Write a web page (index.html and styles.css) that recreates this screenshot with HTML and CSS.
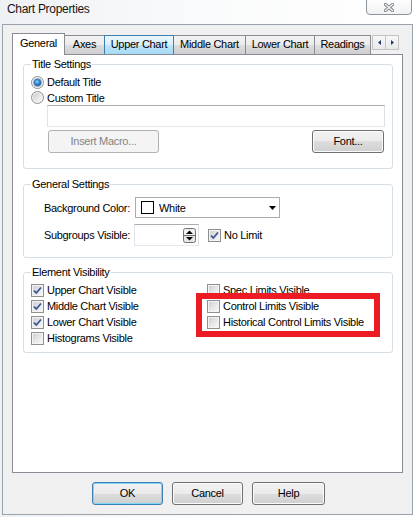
FILE: index.html
```html
<!DOCTYPE html>
<html>
<head>
<meta charset="utf-8">
<title>Chart Properties</title>
<link rel="stylesheet" href="styles.css">
</head>
<body>
<div class="window">
  <div class="titlebar">
    <span class="title">Chart Properties</span>
    <div class="close-btn">
      <svg width="10" height="9" viewBox="0 0 10 9">
        <path d="M1.5 1.5L8.5 7.5M8.5 1.5L1.5 7.5" stroke="#7b8086" stroke-width="3.2" stroke-linecap="square" fill="none"/>
        <path d="M1.5 1.5L8.5 7.5M8.5 1.5L1.5 7.5" stroke="#f6f6f6" stroke-width="1.3" stroke-linecap="square" fill="none"/>
      </svg>
    </div>
  </div>
  <div class="client">
    <div class="tabstrip">
      <div class="tab sel w-general">General</div>
      <div class="tab w-axes">Axes</div>
      <div class="tab hover w-upper">Upper Chart</div>
      <div class="tab w-middle">Middle Chart</div>
      <div class="tab w-lower">Lower Chart</div>
      <div class="tab w-readings">Readings</div>
      <div class="tabscroll">
        <span class="sbtn"><svg width="3" height="5" viewBox="0 0 3 5"><path d="M3 0V5L0 2.5Z" fill="#1f3c78"/></svg></span>
        <span class="sbtn"><svg width="3" height="5" viewBox="0 0 3 5"><path d="M0 0V5L3 2.5Z" fill="#1f3c78"/></svg></span>
      </div>
    </div>
    <div class="panel">
      <fieldset class="group ts">
        <legend>Title Settings</legend>
        <div class="opt r1"><span class="radio checked"></span><span>Default Title</span></div>
        <div class="opt r2"><span class="radio"></span><span>Custom Title</span></div>
        <div class="textbox title-input"></div>
        <div class="ts-buttons">
          <div class="btn disabled w-macro">Insert Macro...</div>
          <div class="btn w-font">Font...</div>
        </div>
      </fieldset>
      <fieldset class="group gs">
        <legend>General Settings</legend>
        <div class="gsrow row-bg">
          <span class="lbl">Background Color:</span>
          <div class="combo">
            <span class="swatch"></span>
            <span class="combo-text">White</span>
            <svg class="combo-arrow" width="7" height="4" viewBox="0 0 7 4"><path d="M0 0H7L3.5 4Z" fill="#000"/></svg>
          </div>
        </div>
        <div class="gsrow row-sub">
          <span class="lbl">Subgroups Visible:</span>
          <div class="spin">
            <svg class="spin-arrows" width="13" height="15" viewBox="0 0 13 15">
              <rect x="0.5" y="0.5" width="12" height="14" rx="2" fill="#e6e6e6" stroke="#707070"/>
              <rect x="1.5" y="1.5" width="10" height="5.5" fill="#f4f4f4"/>
              <line x1="1" y1="7.5" x2="12" y2="7.5" stroke="#707070"/>
              <path d="M3 6H10L6.5 2.5Z" fill="#000"/>
              <path d="M3 9H10L6.5 12.5Z" fill="#000"/>
            </svg>
          </div>
          <div class="opt nolimit"><span class="cb checked"><svg width="11" height="11" viewBox="0 0 11 11"><path d="M2 5.5L4.3 8L9 2.5" stroke="#3d5590" stroke-width="1.8" fill="none"/></svg></span><span>No Limit</span></div>
        </div>
      </fieldset>
      <fieldset class="group ev">
        <legend>Element Visibility</legend>
        <div class="evgrid">
          <div class="opt"><span class="cb checked"><svg width="11" height="11" viewBox="0 0 11 11"><path d="M2 5.5L4.3 8L9 2.5" stroke="#3d5590" stroke-width="1.8" fill="none"/></svg></span><span>Upper Chart Visible</span></div>
          <div class="opt"><span class="cb"></span><span>Spec Limits Visible</span></div>
          <div class="opt"><span class="cb checked"><svg width="11" height="11" viewBox="0 0 11 11"><path d="M2 5.5L4.3 8L9 2.5" stroke="#3d5590" stroke-width="1.8" fill="none"/></svg></span><span>Middle Chart Visible</span></div>
          <div class="opt"><span class="cb"></span><span>Control Limits Visible</span></div>
          <div class="opt"><span class="cb checked"><svg width="11" height="11" viewBox="0 0 11 11"><path d="M2 5.5L4.3 8L9 2.5" stroke="#3d5590" stroke-width="1.8" fill="none"/></svg></span><span>Lower Chart Visible</span></div>
          <div class="opt"><span class="cb"></span><span>Historical Control Limits Visible</span></div>
          <div class="opt"><span class="cb"></span><span>Histograms Visible</span></div>
        </div>
      </fieldset>
    </div>
    <div class="dlg-buttons">
      <div class="btn default w-ok">OK</div>
      <div class="btn w-cancel">Cancel</div>
      <div class="btn w-help">Help</div>
    </div>
  </div>
  <div class="highlight"></div>
</div>
</body>
</html>
```

FILE: styles.css
```css
html, body {
  margin: 0;
  padding: 0;
}
body {
  font-family: "Liberation Sans", Arial, sans-serif;
  font-size: 11px;
  letter-spacing: -0.3px;
  color: #000;
  background: #ffffff;
}
.window {
  position: relative;
  width: 415px;
  height: 517px;
  overflow: hidden;
  background: linear-gradient(90deg, #eef1f4 0%, #f9fafb 45%, #ffffff 100%);
}
.titlebar {
  display: flex;
  align-items: flex-start;
  height: 24px;
  box-sizing: border-box;
  padding-left: 7px;
}
.title {
  font-size: 12px;
  line-height: 15px;
  padding-top: 2px;
  color: #151515;
}
.close-btn {
  margin-left: auto;
  margin-right: 3px;
  margin-top: -1px;
  width: 46px;
  height: 16px;
  box-sizing: border-box;
  border: 1px solid #8d949c;
  border-radius: 0 0 4px 4px;
  background: linear-gradient(#fdfdfd, #f1f2f3);
  display: flex;
  align-items: center;
  justify-content: center;
  padding-top: 1px;
}
.client {
  margin-left: 2px;
  width: 411px;
  height: 491px;
  box-sizing: border-box;
  border: 1px solid #9aa3ab;
  background: #f0f0f0;
  padding: 8px 0 0 9px;
}
/* tabs */
.tabstrip {
  display: flex;
  align-items: flex-end;
  height: 21px;
}
.tab {
  box-sizing: border-box;
  height: 19px;
  border: 1px solid #898c95;
  border-bottom: none;
  margin-left: -1px;
  text-align: center;
  line-height: 17px;
  white-space: nowrap;
  background: linear-gradient(#f2f2f2 0%, #ebebeb 50%, #dddddd 50%, #cfcfcf 100%);
}
.tab.sel {
  margin-left: 0;
  height: 22px;
  align-self: flex-start;
  margin-bottom: -1px;
  background: #ffffff;
  position: relative;
  z-index: 2;
  line-height: 13px;
  padding-top: 3px;
}
.tab.hover {
  position: relative;
  z-index: 1;
  border-color: #3c7fb1;
  background: linear-gradient(#eaf6fd 0%, #d9f0fc 50%, #bee6fd 50%, #a7d9f5 100%);
}
.w-general { width: 53px; }
.w-axes { width: 41px; }
.w-upper { width: 70px; }
.w-middle { width: 73px; }
.w-lower { width: 70px; }
.w-readings { width: 57px; }
.tabscroll {
  display: flex;
  align-self: flex-start;
  margin-top: 2px;
  margin-left: 1px;
}
.sbtn {
  width: 14px;
  height: 15px;
  box-sizing: border-box;
  border: 1px solid #c4c4c4;
  background: linear-gradient(#f7f7f7, #e9e9e9);
  display: flex;
  align-items: center;
  justify-content: center;
}
.sbtn + .sbtn {
  margin-left: -1px;
}
.panel {
  position: relative;
  z-index: 0;
  width: 391px;
  height: 419px;
  box-sizing: border-box;
  border: 1px solid #898c95;
  background: #ffffff;
  padding: 3px 9px 0 10px;
}
/* group boxes */
.group {
  margin: 0;
  padding: 0;
  min-width: 0;
  border: 1px solid #d5dfe5;
  border-radius: 3px;
}
.group legend {
  padding: 0 1px;
  margin-left: 7px;
  line-height: 13px;
}
.ts {
  padding: 3px 0 15px 0;
}
.gs {
  margin-top: 9px;
  padding: 6px 0 11px 0;
}
.ev {
  margin-top: 8px;
  padding: 3px 0 6px 0;
}
.opt {
  display: flex;
  align-items: center;
  gap: 3px;
  height: 16px;
  white-space: nowrap;
}
.ts .opt {
  padding-left: 7px;
}
.ts .r2 {
  height: 15px;
}
.radio {
  width: 13px;
  height: 13px;
  flex: none;
  box-sizing: border-box;
  border: 1px solid #8e8f8f;
  border-radius: 50%;
  background: linear-gradient(135deg, #c4c7cc 0%, #eeeff0 70%, #f8f8f8 100%);
  box-shadow: inset 0 0 0 1px #f4f4f4;
  display: flex;
  align-items: center;
  justify-content: center;
}
.radio.checked {
  background: #f4f4f4;
}
.radio.checked::after {
  content: "";
  width: 7px;
  height: 7px;
  border-radius: 50%;
  background: radial-gradient(circle at 45% 40%, #8fd3ff 0%, #2b7fc9 45%, #0b3a78 100%);
  box-shadow: 0 0 0 0.5px #1d4f8e;
}
.cb {
  width: 13px;
  height: 13px;
  flex: none;
  box-sizing: border-box;
  border: 1px solid #8e8f8f;
  background: linear-gradient(135deg, #c9ccd1 0%, #e9eaeb 60%, #f7f7f7 100%);
  box-shadow: inset 0 0 0 1px #f4f4f4;
  display: flex;
  align-items: center;
  justify-content: center;
}
.textbox {
  box-sizing: border-box;
  border: 1px solid;
  border-color: #abadb3 #dbdfe6 #e3e9ef #e2e3ea;
  background: #ffffff;
}
.title-input {
  margin-left: 23px;
  width: 338px;
  height: 22px;
}
.ts-buttons {
  display: flex;
  justify-content: space-between;
  margin-top: 3px;
  padding: 0 8px 0 24px;
}
.btn {
  height: 23px;
  box-sizing: border-box;
  border: 1px solid #707070;
  border-radius: 3px;
  background: linear-gradient(#f2f2f2 0%, #ebebeb 50%, #dddddd 50%, #cfcfcf 100%);
  box-shadow: inset 0 0 0 1px #fbfbfb;
  text-align: center;
  line-height: 21px;
  white-space: nowrap;
}
.btn.disabled {
  border-color: #adb2b5;
  background: #f4f4f4;
  box-shadow: none;
  color: #838383;
}
.btn.default {
  border-color: #3c7fb1;
  box-shadow: inset 0 0 0 1px #7fd6f7;
}
.w-macro { width: 111px; }
.w-font { width: 72px; }
/* general settings */
.gsrow {
  display: flex;
  align-items: center;
}
.row-bg {
  height: 21px;
}
.row-sub {
  margin-top: 6px;
  height: 22px;
}
.lbl {
  width: 106px;
  text-align: right;
  white-space: nowrap;
}
.combo {
  margin-left: 5px;
  width: 145px;
  height: 21px;
  box-sizing: border-box;
  border: 1px solid #acacac;
  background: #ffffff;
  display: flex;
  align-items: center;
  padding: 0 3px 0 5px;
}
.swatch {
  width: 13px;
  height: 13px;
  box-sizing: border-box;
  border: 1px solid #000;
  background: #fff;
  flex: none;
}
.combo-text {
  margin-left: 5px;
}
.combo-arrow {
  margin-left: auto;
}
.spin {
  margin-left: 4px;
  width: 65px;
  height: 22px;
  box-sizing: border-box;
  border: 1px solid;
  border-color: #abadb3 #dbdfe6 #e3e9ef #e2e3ea;
  background: #ffffff;
  display: flex;
  align-items: center;
  justify-content: flex-end;
  padding-right: 2px;
}
.nolimit {
  margin-left: 9px;
}
/* element visibility */
.evgrid {
  display: grid;
  grid-template-columns: 176px auto;
  grid-auto-rows: 16px;
  padding-left: 7px;
}
/* dialog buttons */
.dlg-buttons {
  display: flex;
  gap: 9px;
  margin-top: 9px;
  margin-left: 80px;
}
.w-ok { width: 71px; }
.w-cancel { width: 71px; }
.w-help { width: 73px; }
/* annotation overlay */
.highlight {
  position: absolute;
  left: 196px;
  top: 293px;
  width: 184px;
  height: 44px;
  box-sizing: border-box;
  border: 6px solid #ed1c24;
}
```
